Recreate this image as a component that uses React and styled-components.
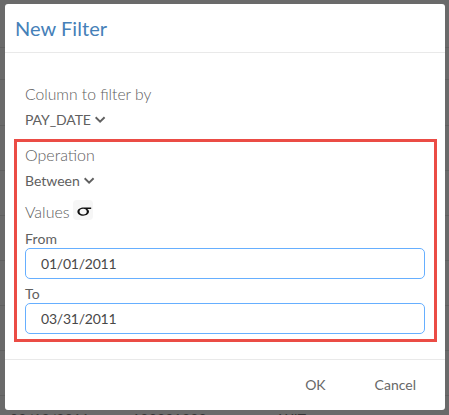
import React from "react";
import styled, { createGlobalStyle } from "styled-components";

const GlobalStyle = createGlobalStyle`
  * { box-sizing: border-box; }
  body { margin: 0; overflow: hidden; font-family: Lato, sans-serif; }
`;

const Page = styled.div`
  position: relative;
  width: 449px;
  height: 415px;
  overflow: hidden;
  background: #6a6a6a;
`;

const TableRow = styled.div`
  display: grid;
  grid-template-columns: 122px 147px 1fr;
  align-items: center;
  height: ${(p) => p.$height}px;
  padding-left: 10px;
  border-bottom: 1px solid #606060;
  color: #353535;
  font-size: 14px;
  letter-spacing: 0.2px;
`;

const Dialog = styled.section`
  position: absolute;
  left: 5px;
  top: 4px;
  display: flex;
  flex-direction: column;
  width: 440px;
  height: 406px;
  border-radius: 3px;
  background: #fff;
  color: #606060;
`;

const Header = styled.header`
  height: 49px;
  padding: 0 10px;
  border-bottom: 1px solid #e9e9e9;
`;

const Title = styled.h1`
  margin: 0;
  color: #4580b8;
  font-size: 20px;
  font-weight: 400;
  line-height: 48px;
  letter-spacing: 0.05px;
`;

const Body = styled.div`
  flex: 1;
  padding: 29px 8px 0 9px;
`;

const Section = styled.div`
  padding: 0 12px 0 11px;
`;

const Highlight = styled.div`
  height: 203px;
  margin-top: 5px;
  padding: 1px 9px 0 8px;
  border: 3px solid #eb4c45;
`;

const Heading = styled.div`
  display: flex;
  align-items: center;
  gap: 3px;
  height: ${(p) => p.$height || 22}px;
  padding-top: ${(p) => p.$offset || 0}px;
  color: #606060;
  font-size: ${(p) => p.$size || 16}px;
  font-weight: 300;
`;

const Picker = styled.button`
  display: flex;
  align-items: center;
  gap: 4px;
  height: 30px;
  padding: 0;
  border: 0;
  background: none;
  color: #606060;
  font: 400 14px Lato, sans-serif;
  letter-spacing: ${(p) => p.$tracking || 0}px;

  svg { margin-top: 1px; }
`;

const SigmaBadge = styled.span`
  display: flex;
  align-items: center;
  justify-content: center;
  width: 20px;
  height: 20px;
  margin-top: -2px;
  border-radius: 4px;
  background: #f6f6f6;
`;

const Label = styled.label`
  display: block;
  height: ${(p) => p.$height}px;
  padding-top: ${(p) => p.$offset}px;
  font-size: 14px;
  line-height: 20px;
  letter-spacing: 0.15px;
`;

const Input = styled.input`
  display: block;
  width: 400px;
  height: 31px;
  padding: 0 15px;
  border: 1px solid #66afff;
  border-radius: 5px;
  background: #fff;
  color: #484848;
  font: 400 14px Lato, sans-serif;
  letter-spacing: -0.22px;
  outline: 0;
`;

const Footer = styled.footer`
  display: flex;
  align-items: center;
  justify-content: flex-end;
  gap: 49px;
  height: 51px;
  padding: 0 29px 2px 0;
  border-top: 1px solid #e9e9e9;
`;

const Action = styled.button`
  padding: 0;
  border: 0;
  background: none;
  color: #686868;
  font: 400 14px Lato, sans-serif;
`;

const Chevron = () => (
  <svg width="11" height="8" viewBox="0 0 11 8" fill="none">
    <path d="M0.6 1.3 5.1 5.6 9.6 1.3" stroke="#606060" strokeWidth="2" />
  </svg>
);

const Sigma = () => (
  <svg width="20" height="20" viewBox="0 0 20 20" fill="#101010">
    <path
      fillRule="evenodd"
      d="M18.2 7.4V9H14.2C15.4 9.7 16 10.6 16 11.6C16 14 13.5 15.7 10.2 15.7C6.8 15.7 4.4 14 4.4 11.7C4.4 9 7.2 7.4 11 7.4ZM10.1 8.8C7.8 8.8 6.5 10 6.5 11.6C6.5 13.3 8 14.6 10.3 14.6C12.5 14.6 13.8 13.4 13.8 11.8C13.8 10 12.4 8.8 10.1 8.8Z"
    />
  </svg>
);

const rows = [48, 32, 46, 45, 45, 45, 45, 45, 45];

export default function App() {
  return (
    <>
      <GlobalStyle />
      <Page>
        {rows.map((height, i) => (
          <TableRow key={i} $height={height} />
        ))}
        <TableRow $height={45}>
          <span>03/12/2011</span>
          <span>123231233</span>
          <span>WIT</span>
        </TableRow>
        <Dialog>
          <Header>
            <Title>New Filter</Title>
          </Header>
          <Body>
            <Section>
              <Heading $size={15.7} $offset={2}>Column to filter by</Heading>
              <Picker $tracking={-0.1}>PAY_DATE <Chevron /></Picker>
            </Section>
            <Highlight>
              <Heading>Operation</Heading>
              <Picker>Between <Chevron /></Picker>
              <Heading $height={32}>
                Values
                <SigmaBadge><Sigma /></SigmaBadge>
              </Heading>
              <Label htmlFor="from" $height={21} $offset={2}>From</Label>
              <Input id="from" defaultValue="01/01/2011" />
              <Label htmlFor="to" $height={24} $offset={5}>To</Label>
              <Input id="to" defaultValue="03/31/2011" />
            </Highlight>
          </Body>
          <Footer>
            <Action>OK</Action>
            <Action>Cancel</Action>
          </Footer>
        </Dialog>
      </Page>
    </>
  );
}
